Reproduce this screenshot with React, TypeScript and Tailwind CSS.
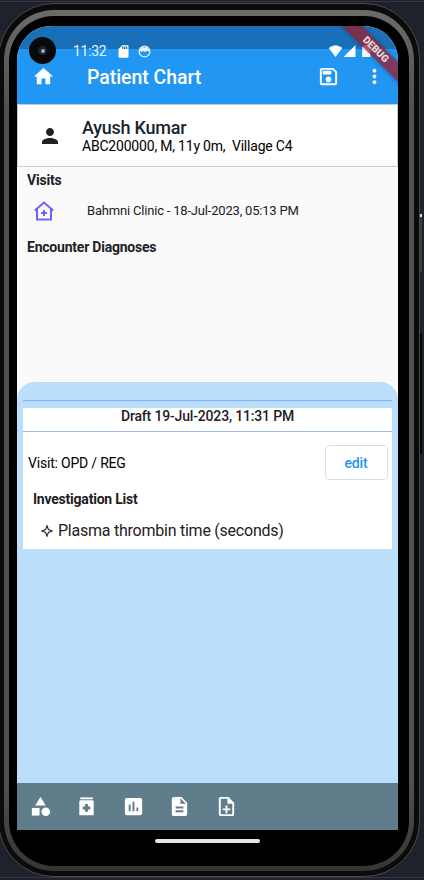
import React from "react";
import {
  MdHome, MdMoreVert, MdPerson, MdSdCard, MdCategory, MdInsertChart, MdDescription,
  MdOutlineSave, MdOutlineNoteAdd,
} from "react-icons/md";

function StatusBar() {
  return (
    <div className="relative flex h-[39px] items-start bg-[linear-gradient(#1a70b8_23px,#2196f3_23px)]">
      <div className="ml-[12px] mt-[11px] flex size-[27px] items-center justify-center rounded-full bg-[#08090b]">
        <div className="flex size-[9px] items-center justify-center rounded-full bg-[#20232d]">
          <div className="size-[4px] rounded-full bg-[#9ba5d8]" />
        </div>
      </div>
      <span className="ml-[17px] mt-[17px] w-[34px] whitespace-nowrap text-[14px] leading-[17px] tracking-[-0.3px] text-[#eaf5ff]">11:32</span>
      <MdSdCard className="ml-[9px] mt-[18px] size-[15px] text-white" />
      <svg className="ml-[7px] mt-[19px] size-[13px]" viewBox="0 0 13 13">
        <circle cx="6.5" cy="6.5" r="5.4" fill="none" stroke="#e6f3ff" strokeWidth="1.200" />
        <path d="M1.500 5L4 1.800l2.500.8L9 1.800 11.500 5l-.7 1.500-1.700-.8-2 1.400-1.700-1.200L3 7z" fill="#e6f3ff" />
      </svg>
      <svg className="ml-[177px] mt-[19px] h-[13px] w-[44px]" viewBox="0 0 44 13">
        <path d="M.7 3Q7.500-2.400 14.300 3L7.500 12z" fill="#fff" />
        <path d="M27.500 0v12H15.500z" fill="#fff" />
        <path d="M34.200 1.500h2V0h4v1.500h2.300v10.500h-8.300z" fill="#fff" />
      </svg>
    </div>
  );
}

function AppBar() {
  return (
    <div className="flex h-[39px] items-start bg-[#2196f3] text-white">
      <MdHome className="ml-[15px] size-[23px]" />
      <h1 className="ml-[32px] mt-px w-[229.500px] text-[19.500px] font-medium leading-[24px] tracking-[-0.050px]">Patient Chart</h1>
      <MdOutlineSave className="size-[23px]" />
      <MdMoreVert className="ml-[23.500px] size-[23px]" />
    </div>
  );
}

function DebugBanner() {
  return (
    <div className="absolute right-[-27px] top-[16px] flex h-[13.700px] w-[100px] rotate-45 items-center justify-center bg-[#9b1c2c]/75 pl-[2px] text-[10px] font-black leading-none text-white/80 shadow-[0_0_5px_rgba(0,0,0,.3)]">
      DEBUG
    </div>
  );
}

function Medication() {
  return (
    <svg className="size-[23px]" viewBox="0 0 24 24" fill="currentColor">
      <path d="M5.500 2.500h13v2h-13z" />
      <path fillRule="evenodd" d="M6 5.500h12q1.500 0 1.500 1.500v14h-15V7Q4.500 5.500 6 5.500zm4.500 4V12H8v3h2.500v2.500h3V15H16v-3h-2.500V9.500z" />
    </svg>
  );
}

function ClinicIcon() {
  return (
    <svg className="ml-[17px] size-[20px]" viewBox="0 0 20 20" fill="none" stroke="#6c63ff" strokeWidth="2">
      <path d="M.8 9.500L10 1.600l9.200 7.900M3 8v10.500h14V8" />
      <path d="M10 9v6M7 12h6" />
    </svg>
  );
}

function DraftSheet() {
  return (
    <section className="h-[401px] rounded-t-[18px] bg-[#bbdefb] px-[6px] pt-[18px] text-[#1f2022]">
      <div className="h-px bg-[#82b1ff]" />
      <div className="mt-[7px] h-[141px] bg-white">
        <div className="h-[24px] border-b border-[#9dbaf5] text-center text-[14px] font-medium leading-[17px] tracking-[-0.170px]">
          Draft 19-Jul-2023, 11:31 PM
        </div>
        <div className="flex items-center justify-between pl-[5px] pr-[4.500px] pt-[13px]">
          <span className="pt-[2px] text-[14px] tracking-[-0.200px] text-black">Visit: OPD / REG</span>
          <button className="h-[35px] w-[63px] rounded-[4px] border border-[#dedede] pt-px text-[14px] font-medium tracking-[-0.1px] text-[#2196f3]">edit</button>
        </div>
        <h3 className="ml-[10px] mt-[11px] text-[14px] font-bold leading-[16px] tracking-[-0.220px]">Investigation List</h3>
        <div className="mt-[14px] flex h-[20px] items-center pl-[18px] text-[16px]">
          <svg className="size-[12px]" viewBox="0 0 12 12" fill="none" stroke="#222" strokeWidth="1.100">
            <path d="M6 .8L7.400 4.600 11.200 6 7.400 7.400 6 11.200 4.600 7.400.8 6l3.800-1.400z" />
          </svg>
          <span className="ml-[5px] tracking-[-0.240px]">Plasma thrombin time (seconds)</span>
        </div>
      </div>
    </section>
  );
}

export default function App() {
  return (
    <div className="relative h-[880px] w-[424px] overflow-hidden bg-[#20222b] pt-[3px] font-[Roboto,'Liberation_Sans',sans-serif]">
      <div className="absolute left-0 top-[1px] h-px w-full bg-[#353740]" />
      <div className="absolute left-0 top-[877px] h-px w-full bg-[#353740]" />
      <div className="absolute left-[420px] top-[214px] h-[58px] w-[2px] bg-[#3b3b3e]" />
      <div className="absolute left-[420px] top-[214px] h-[3px] w-[2px] bg-[#ddd]" />
      <div className="absolute left-[420px] top-[333px] h-[121px] w-[2px] bg-[#050506]" />
      <div className="-ml-[2px] h-[874px] w-[422px] rounded-[56px] border border-[#4a4a4a] bg-[#0b0b0b] px-[5px] py-[6px]">
        <div className="h-[861px] rounded-[50px] bg-[linear-gradient(#6b6b6b,#505050_12%,#505050_90%,#353535)] p-[5px] pt-[6px]">
          <div className="h-[850px] rounded-[45px] bg-black pl-[8px] pt-[10px]">
            <div className="relative h-[804px] w-[381px] overflow-hidden rounded-b-[2px/15px] rounded-t-[34px] bg-[#fafafa]">
              <StatusBar />
              <AppBar />
              <header className="flex h-[63px] items-center border border-[#c5ccd8] bg-white">
                <MdPerson className="ml-[20px] size-[24px] text-[#202124]" />
                <div className="ml-[20px]">
                  <h2 className="text-[18px] font-medium leading-[20px] tracking-[-0.250px] text-[#172530]">Ayush Kumar</h2>
                  <p className="whitespace-pre text-[14px] leading-[16px] tracking-[-0.200px] text-black">ABC200000, M, 11y 0m,  Village C4</p>
                </div>
              </header>
              <main className="h-[215px] pt-[5px] text-[#202124]">
                <h3 className="ml-[10px] text-[14px] font-bold leading-[17px] tracking-[-0.200px]">Visits</h3>
                <div className="mt-[12px] flex h-[20px] items-center">
                  <ClinicIcon />
                  <span className="ml-[33px] text-[13px] tracking-[-0.190px]">Bahmni Clinic - 18-Jul-2023, 05:13 PM</span>
                </div>
                <h3 className="ml-[10px] mt-[18px] text-[14px] font-bold leading-[17px] tracking-[-0.220px]">Encounter Diagnoses</h3>
              </main>
              <DraftSheet />
              <nav className="flex h-[47px] items-center gap-[23.500px] bg-[#607d8b] pl-[11.500px] text-white">
                <MdCategory className="size-[23px]" />
                <Medication />
                <MdInsertChart className="size-[23px]" />
                <MdDescription className="size-[23px]" />
                <MdOutlineNoteAdd className="size-[23px]" />
              </nav>
              <DebugBanner />
            </div>
            <div className="ml-[138px] mt-[9px] h-[4px] w-[105px] rounded-full bg-[#e6e6e6]" />
          </div>
        </div>
      </div>
    </div>
  );
}
